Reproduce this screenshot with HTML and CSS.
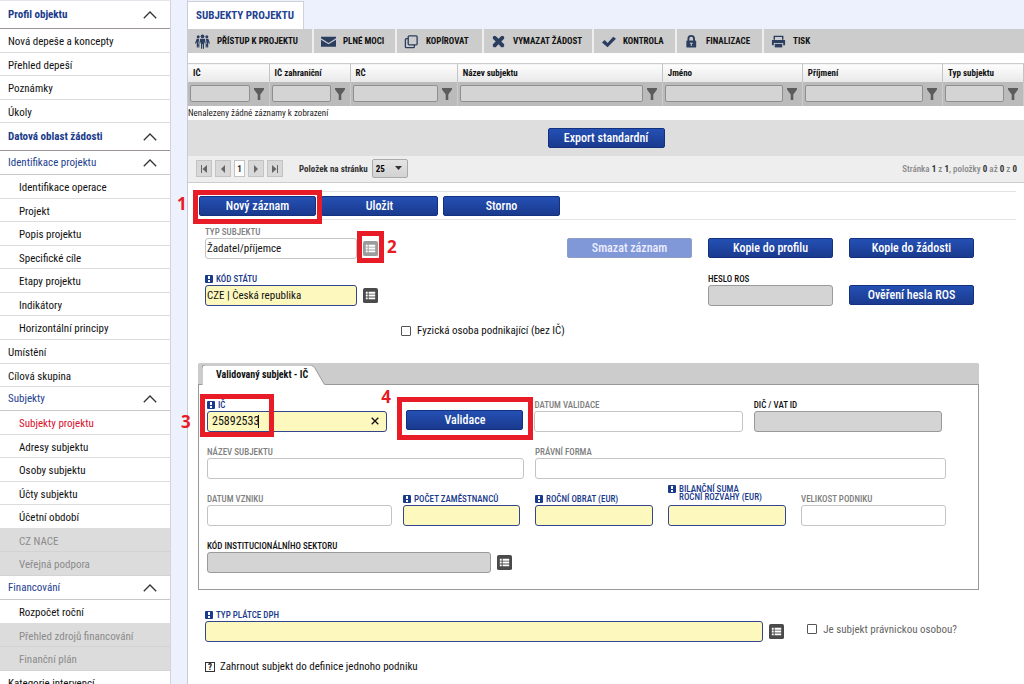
FILE: index.html
```html
<!DOCTYPE html>
<html lang="cs">
<head>
<meta charset="utf-8">
<title>Subjekty projektu</title>
<link rel="stylesheet" href="styles.css">
</head>
<body>
<svg class="sprite" aria-hidden="true">
  <symbol id="i-up" viewBox="0 0 14 8"><path d="M.8 7.200 7 1l6.200 6.200" fill="none" stroke="#333" stroke-width="1.300"/></symbol>
  <symbol id="i-funnel" viewBox="0 0 10 12"><path d="M0 0h10v1.500L6.300 6.500V12H3.700V6.500L0 1.500z" fill="#5c5c5c"/></symbol>
  <symbol id="i-list" viewBox="0 0 16 16"><rect width="16" height="16" rx="2" fill="currentColor"/><path d="M3 4h2v2H3zM6 4h7v2H6zM3 7h2v2H3zM6 7h7v2H6zM3 10h2v2H3zM6 10h7v2H6z" fill="#fff"/></symbol>
  <symbol id="i-req" viewBox="0 0 8 8"><rect width="8" height="8" rx="1" fill="#1a3a8c"/><path d="M3 1h2v3H3zM3 5h2v2H3z" fill="#fff"/></symbol>
</svg>
<div class="app">
  <nav class="side" aria-label="Menu">
    <button class="side-head strong">Profil objektu<svg><use href="#i-up"/></svg></button>
    <ul>
      <li><a href="#">Nová depeše a koncepty</a></li>
      <li><a href="#">Přehled depeší</a></li>
      <li><a href="#">Poznámky</a></li>
      <li><a href="#">Úkoly</a></li>
    </ul>
    <button class="side-head strong">Datová oblast žádosti<svg><use href="#i-up"/></svg></button>
    <button class="side-head">Identifikace projektu<svg><use href="#i-up"/></svg></button>
    <ul class="sub">
      <li><a href="#">Identifikace operace</a></li>
      <li><a href="#">Projekt</a></li>
      <li><a href="#">Popis projektu</a></li>
      <li><a href="#">Specifické cíle</a></li>
      <li><a href="#">Etapy projektu</a></li>
      <li><a href="#">Indikátory</a></li>
      <li><a href="#">Horizontální principy</a></li>
    </ul>
    <ul>
      <li><a href="#">Umístění</a></li>
      <li><a href="#">Cílová skupina</a></li>
    </ul>
    <button class="side-head">Subjekty<svg><use href="#i-up"/></svg></button>
    <ul class="sub">
      <li><a href="#" class="active">Subjekty projektu</a></li>
      <li><a href="#">Adresy subjektu</a></li>
      <li><a href="#">Osoby subjektu</a></li>
      <li><a href="#">Účty subjektu</a></li>
      <li><a href="#">Účetní období</a></li>
      <li class="off"><a href="#">CZ NACE</a></li>
      <li class="off"><a href="#">Veřejná podpora</a></li>
    </ul>
    <button class="side-head">Financování<svg><use href="#i-up"/></svg></button>
    <ul class="sub">
      <li><a href="#">Rozpočet roční</a></li>
      <li class="off"><a href="#">Přehled zdrojů financování</a></li>
      <li class="off"><a href="#">Finanční plán</a></li>
    </ul>
    <ul>
      <li><a href="#">Kategorie intervencí</a></li>
    </ul>
  </nav>

  <main class="main">
    <div class="tabs"><h1>SUBJEKTY PROJEKTU</h1></div>
    <div class="content">
      <div class="toolbar">
        <button><svg viewBox="0 0 16 16"><g fill="#2c3e60"><circle cx="8" cy="2.500" r="2"/><circle cx="3.400" cy="3" r="1.600"/><circle cx="12.600" cy="3" r="1.600"/><path d="M5.500 5h5l1 5-1 .3-.9-2.300v7.800H8.400V11h-.8v4.800H6.400V8l-.9 2.300-1-.3zM1.800 5h2.700l-1 5.500 1.200.5v3.500H3.600l-.3-3-.3 3H1.900V8.500L1 10.500l-1-.5zM14.200 5h-2.700l1 5.500-1.200.5v3.500h1.100l.3-3 .3 3h1.100V8.500l.9 2 1-.5z"/></g></svg>PŘÍSTUP K PROJEKTU</button>
        <button><svg viewBox="0 0 16 16"><path d="M0 3h16v1.500L8 9.500 0 4.500zM0 6l8 5 8-5v7.500H0z" fill="#2c3e60"/></svg>PLNÉ MOCI</button>
        <button><svg viewBox="0 0 16 16"><g fill="none" stroke="#2c3e60" stroke-width="1.400"><rect x="4.500" y="2" width="9.500" height="9.500" rx="1"/><path d="M4.500 5H2.500a1 1 0 0 0-1 1v7.500a1 1 0 0 0 1 1H10a1 1 0 0 0 1-1v-2"/></g></svg>KOPÍROVAT</button>
        <button><svg viewBox="0 0 16 16"><path d="M5 2 8 5l3-3h2l1 1v2l-3 3 3 3v2l-1 1h-2l-3-3-3 3H3l-1-1v-2l3-3-3-3V3l1-1z" fill="#2c3e60"/></svg>VYMAZAT ŽÁDOST</button>
        <button><svg viewBox="0 0 16 16"><path d="M1 9 4 6.500l3 3L13 3l3 2-9 9z" fill="#2c3e60"/></svg>KONTROLA</button>
        <button><svg viewBox="0 0 16 16"><path d="M4.700 8V5a3 3 0 0 1 6 0v3" fill="none" stroke="#2c3e60" stroke-width="2"/><rect x="2.500" y="7" width="10.500" height="7.500" rx="1" fill="#2c3e60"/><path d="M6.300 9.200h3v1.200h-1v2.400h-1v-2.400h-1z" fill="#ccc"/></svg>FINALIZACE</button>
        <button><svg viewBox="0 0 16 16"><path d="M3.500 6V2.500h9V6" fill="none" stroke="#2c3e60" stroke-width="1.500"/><path d="M1 6.500h14V12h-2V9.500H3V12H1z" fill="#2c3e60"/><path d="M4 10.500h8v3.800H4z" fill="#2c3e60"/></svg>TISK</button>
      </div>

      <table class="grid">
        <colgroup><col class="w81"><col class="w81"><col class="w107"><col class="w205"><col class="w140"><col class="w140"><col class="w81"></colgroup>
        <thead>
          <tr><th>IČ</th><th>IČ zahraniční</th><th>RČ</th><th>Název subjektu</th><th>Jméno</th><th>Příjmení</th><th>Typ subjektu</th></tr>
          <tr class="filters">
            <td><div><input aria-label="Filtr IČ"><button aria-label="Filtrovat"><svg><use href="#i-funnel"/></svg></button></div></td>
            <td><div><input aria-label="Filtr IČ zahraniční"><button aria-label="Filtrovat"><svg><use href="#i-funnel"/></svg></button></div></td>
            <td><div><input aria-label="Filtr RČ"><button aria-label="Filtrovat"><svg><use href="#i-funnel"/></svg></button></div></td>
            <td><div><input aria-label="Filtr název subjektu"><button aria-label="Filtrovat"><svg><use href="#i-funnel"/></svg></button></div></td>
            <td><div><input aria-label="Filtr jméno"><button aria-label="Filtrovat"><svg><use href="#i-funnel"/></svg></button></div></td>
            <td><div><input aria-label="Filtr příjmení"><button aria-label="Filtrovat"><svg><use href="#i-funnel"/></svg></button></div></td>
            <td><div><input aria-label="Filtr typ subjektu"><button aria-label="Filtrovat"><svg><use href="#i-funnel"/></svg></button></div></td>
          </tr>
        </thead>
        <tbody><tr><td colspan="7" class="empty">Nenalezeny žádné záznamy k zobrazení</td></tr></tbody>
      </table>
      <div class="export"><button class="btn">Export standardní</button></div>
      <div class="pager">
        <div class="pages">
          <button aria-label="První"><svg viewBox="0 0 8 8"><path d="M1 0h1v8H1zM7 0v8L2.500 4z"/></svg></button>
          <button aria-label="Předchozí"><svg viewBox="0 0 8 8"><path d="M6 0v8L2 4z"/></svg></button>
          <button class="current">1</button>
          <button aria-label="Další"><svg viewBox="0 0 8 8"><path d="M2 0v8l4-4z"/></svg></button>
          <button aria-label="Poslední"><svg viewBox="0 0 8 8"><path d="M6 0h1v8H6zM1 0v8l4.500-4z"/></svg></button>
        </div>
        <label for="size">Položek na stránku</label>
        <div class="select"><select id="size"><option>25</option></select><svg viewBox="0 0 7 4"><path d="M0 0h7L3.500 4z" fill="#333"/></svg></div>
        <p>Stránka <b>1</b> z <b>1</b>, položky <b>0</b> až <b>0</b> z <b>0</b></p>
      </div>

      <div class="actions">
        <div class="spot spot-new"><button class="btn">Nový záznam</button><span class="mark"></span><span class="num">1</span></div>
        <button class="btn">Uložit</button>
        <button class="btn">Storno</button>
      </div>

      <form class="form">
        <div class="top">
          <div class="field muted"><label for="typ">TYP SUBJEKTU</label>
            <div class="pick"><input id="typ" value="Žadatel/příjemce"><div class="spot spot-pick"><button type="button" class="list pale" aria-label="Vybrat typ"><svg><use href="#i-list"/></svg></button><span class="mark"></span><span class="num">2</span></div></div></div>
          <button type="button" class="btn faded">Smazat záznam</button>
          <button type="button" class="btn">Kopie do profilu</button>
          <button type="button" class="btn">Kopie do žádosti</button>
          <div class="field req"><label for="stat"><svg><use href="#i-req"/></svg>KÓD STÁTU</label>
            <div class="pick"><input id="stat" value="CZE | Česká republika"><button type="button" class="list" aria-label="Vybrat stát"><svg><use href="#i-list"/></svg></button></div></div>
          <div class="field locked c3"><label for="heslo">HESLO ROS</label><input id="heslo" type="password" readonly></div>
          <button type="button" class="btn">Ověření hesla ROS</button>
        </div>
        <label class="check person"><input type="checkbox">Fyzická osoba podnikající (bez IČ)</label>

        <section class="panel">
          <div class="panel-bar"><h2><svg viewBox="0 0 124 20" preserveAspectRatio="none" aria-hidden="true"><path d="M0 20V3q0-3 3-3h104q5 0 7 5l7 12q1 3 3 3z" fill="#fff"/><path d="M0 20V3q0-3 3-3h104q5 0 7 5l7 12q1 3 3 3" fill="none" stroke="#999"/></svg><span>Validovaný subjekt - IČ</span></h2></div>
          <div class="panel-body">
            <div class="row r1">
              <div class="field req spot spot-ic"><label for="ic"><svg><use href="#i-req"/></svg>IČ</label>
                <div class="clearable"><input id="ic" value="25892533"><i class="caret"></i><button type="button" aria-label="Smazat"><svg viewBox="0 0 8 8"><path d="m.7.7 6.600 6.600M7.300.7.700 7.300" stroke="#111" stroke-width="1.300"/></svg></button></div>
                <span class="mark"></span><span class="num">3</span></div>
              <div class="spot spot-val"><button type="button" class="btn">Validace</button><span class="mark"></span><span class="num">4</span></div>
              <div class="field muted"><label for="dv">DATUM VALIDACE</label><input id="dv"></div>
              <div class="field locked"><label for="dic">DIČ / VAT ID</label><input id="dic" readonly></div>
            </div>
            <div class="row r2">
              <div class="field muted"><label for="nazev">NÁZEV SUBJEKTU</label><input id="nazev"></div>
              <div class="field muted"><label for="forma">PRÁVNÍ FORMA</label><input id="forma"></div>
            </div>
            <div class="row r3">
              <div class="field muted"><label for="vznik">DATUM VZNIKU</label><input id="vznik"></div>
              <div class="field req inset"><label for="pocet"><svg><use href="#i-req"/></svg>POČET ZAMĚSTNANCŮ</label><input id="pocet"></div>
              <div class="field req inset"><label for="obrat"><svg><use href="#i-req"/></svg>ROČNÍ OBRAT (EUR)</label><input id="obrat"></div>
              <div class="field req inset"><label class="two" for="suma"><svg><use href="#i-req"/></svg><span>BILANČNÍ SUMA<br>ROČNÍ ROZVAHY (EUR)</span></label><input id="suma"></div>
              <div class="field muted"><label for="velikost">VELIKOST PODNIKU</label><input id="velikost"></div>
            </div>
            <div class="row r4">
              <div class="field locked"><label for="sektor">KÓD INSTITUCIONÁLNÍHO SEKTORU</label>
                <div class="pick"><input id="sektor" readonly><button type="button" class="list" aria-label="Vybrat sektor"><svg><use href="#i-list"/></svg></button></div></div>
            </div>
          </div>
        </section>

        <div class="vat">
          <div class="field req"><label for="dph"><svg><use href="#i-req"/></svg>TYP PLÁTCE DPH</label>
            <div class="pick"><input id="dph"><button type="button" class="list" aria-label="Vybrat typ plátce"><svg><use href="#i-list"/></svg></button></div></div>
          <label class="check dim"><input type="checkbox">Je subjekt právnickou osobou?</label>
        </div>
        <div class="include"><button type="button" class="tri" aria-label="Nezadáno">?</button>Zahrnout subjekt do definice jednoho podniku</div>
      </form>
    </div>
  </main>
</div>
</body>
</html>
```
FILE: styles.css
```css
* { box-sizing: border-box; }
body, h1, h2, p, ul { margin: 0; padding: 0; }
body, button, input, select {
  font-family: "Roboto Condensed", "Liberation Sans Narrow", Roboto, sans-serif;
  font-size: 11px;
}
body { color: #111; background: #edf0fd; }
ul { list-style: none; }
a { color: inherit; text-decoration: none; }
button { border: 0; padding: 0; background: none; color: inherit; }
svg { display: block; }
.sprite { position: absolute; width: 0; height: 0; }
.app { display: flex; height: 100vh; overflow: hidden; }

.side { width: 171px; flex: none; background: #fff; border-top: 1px solid #e4e4ea; border-right: 1px solid #d3d3da; margin-right: 16px; }
.side li { height: 24px; border-bottom: 1px solid #dcdcdc; padding-left: 8px; line-height: 25px; white-space: nowrap; }
.side li:nth-child(even) { height: 23px; }
.side .sub li { padding-left: 19px; }
.side .active { color: #d8102c; }
.side .off { background: #dcdcdc; color: #8b8b8b; border-color: #d3d3d3; }
.side-head { display: flex; align-items: center; justify-content: space-between; width: 100%; height: 24px; padding: 0 13px 0 8px; color: #23418f; border-bottom: 1px solid #c8c8c8; }
.side-head.strong { height: 28px; font-weight: bold; color: #1a3a8c; border-color: #9a9494; }
.side-head svg { width: 14px; height: 8px; }

.main { flex: 1; min-width: 0; border-left: 1px solid #c9cad6; }
.tabs { height: 29px; padding-top: 1px; background: #edf0fd; }
.tabs h1 { display: inline-block; height: 28px; padding: 0 8px; background: #fff; border: 1px solid #cfd0da; border-width: 1px 1px 0 0; color: #23418f; font-size: 11px; font-weight: bold; line-height: 28px; min-width: 116px; }
.content { background: #fff; height: 100%; }

.toolbar { display: grid; grid-template-columns: 126px 83px 87px 110px 83px 87px 1fr; height: 24px; background: #ccc; }
.toolbar button { display: flex; align-items: center; gap: 7px; padding-left: 7px; border-right: 2px solid #eee; font-size: 9px; font-weight: bold; white-space: nowrap; }
.toolbar button:last-child { border-right: 0; }
.toolbar svg { width: 15px; height: 15px; flex: none; }

.grid { width: 100%; margin-top: 10px; table-layout: fixed; border-collapse: collapse; border-top: 1px solid #ccc; }
.w81 { width: 81px; } .w107 { width: 107px; } .w205 { width: 205px; } .w140 { width: 140px; }
.grid th { height: 18px; padding: 0 5px; text-align: left; font-size: 9px; background: linear-gradient(#fdfdfd, #e8e8e8); border-right: 1px solid #c4c4c4; white-space: nowrap; }
.grid td { padding: 0; }
.filters td { height: 24px; background: #bbb; border-right: 1px solid #ccc; }
.filters div { display: flex; align-items: center; gap: 4px; padding: 0 5px 0 2px; }
.filters input { flex: 1; min-width: 0; height: 17px; border: 1px solid #8f8f8f; border-radius: 2px; background: #d4d4d4; }
.filters button, .filters svg { width: 10px; height: 12px; }
.grid .empty { height: 14px; font-size: 9px; line-height: 14px; color: #222; }

.btn { height: 20px; min-width: 117px; border: 1px solid #14317f; border-radius: 2px; background: linear-gradient(#2450b4, #1a3a8e); color: #fff; font-size: 12px; font-weight: 500; line-height: 18px; white-space: nowrap; }
.btn.faded { background: #8098d8; border-color: #8f9dc4; color: #eef; }
.export { display: flex; justify-content: center; align-items: center; height: 36px; background: #dedede; }
.pager { display: flex; align-items: center; height: 27px; padding: 0 7px 0 8px; background: #eee; border-bottom: 1px solid #ccc; font-size: 9px; font-weight: bold; color: #333; }
.pages { display: flex; gap: 3px; margin-right: 16px; }
.pages button { display: grid; place-items: center; width: 16px; height: 17px; border: 1px solid #c3c3c3; background: #d8d8d8; font-size: 9px; }
.pages .current { width: 11px; background: #fff; font-weight: bold; }
.pages svg { width: 8px; height: 8px; fill: #666; }
.select { position: relative; margin-left: 4px; }
.select select { appearance: none; display: block; width: 36px; height: 19px; padding: 0 3px; border: 1px solid #aaa; border-radius: 2px; background: linear-gradient(#e4e4e4, #d2d2d2); font-size: 9px; font-weight: bold; }
.select svg { position: absolute; right: 6px; top: 7px; width: 7px; height: 4px; pointer-events: none; }
.pager p { margin-left: auto; font-weight: 500; color: #888; }
.pager p b { color: #333; }

.actions { display: flex; align-items: center; gap: 5px; height: 29px; margin: 8px 8px 0; padding: 2px 0 0 3px; border: 1px solid #e3e3e3; border-width: 1px 0; }

.spot { position: relative; }
.mark { position: absolute; border: 5px solid #e81c26; pointer-events: none; }
.num { position: absolute; color: #e81c26; font: bold 17px/20px "Open Sans", sans-serif; }
.spot-new .mark { inset: -6px -6px -8px; }
.spot-new .num { left: -22px; top: -2px; }
.spot-pick .mark { inset: -10px -6px -7px; }
.spot-pick .num { left: 24px; top: -4px; }
.spot-ic .mark { left: -7px; top: -6px; width: 74px; height: 43px; }
.spot-ic .num { left: -26px; top: 12px; }
.spot-val .mark { right: -10px; top: -3px; width: 136px; height: 43px; }
.spot-val .num { left: -17px; top: -13px; }

.form { padding: 7px 45px 0 10px; }
.field label { display: flex; align-items: center; gap: 3px; height: 11px; font-size: 9px; font-weight: 500; line-height: 9px; white-space: nowrap; }
.field label svg { width: 8px; height: 8px; flex: none; }
.field input { display: block; width: 100%; height: 21px; padding: 0 1px; border: 1px solid #c4c4c4; border-radius: 3px; background: #fff; color: #111; }
.muted label { color: #808080; }
.req label { color: #1a3a8c; }
.req input { border-color: #33458c; background: #fdf8bd; }
.locked input { border-color: #9a9a9a; background: #d4d4d4; }
.field .two { align-items: flex-start; height: 20px; line-height: 8px; }
.pick { display: flex; align-items: center; gap: 6px; }
.list { display: block; width: 15px; height: 15px; color: #4a4a4a; flex: none; }
.list svg { width: 15px; height: 15px; }
.list.pale { color: #9c9c9c; }

.top { display: grid; grid-template-columns: 346fr 125fr 125fr 125fr; gap: 15px 16px; padding: 0 5px 0 7px; align-items: end; }
.top .field:not(.c3) { width: 50%; }
.top .c3 { grid-column: 3; }
.top .btn { margin-bottom: 1px; }
.check { display: flex; align-items: center; gap: 6px; }
.check input { appearance: none; width: 10px; height: 10px; margin: 0; border: 1px solid #555; border-radius: 1px; background: #fff; }
.person { height: 16px; margin: 17px 0 24px; padding-left: 26%; }
.dim { color: #666; }

.panel { border: 1px solid #999; border-top: 0; border-radius: 3px 3px 0 0; }
.panel-bar { display: flex; align-items: flex-end; height: 22px; margin: 0 -1px; padding-left: 4px; background: #ccc; border-bottom: 1px solid #999; border-radius: 3px 3px 0 0; }
.panel-bar h2 { position: relative; padding: 0 10px 0 14px; height: 20px; font-size: 10px; line-height: 19px; margin-bottom: -1px; width: 124px; white-space: nowrap; }
.panel-bar h2 svg { position: absolute; inset: 0; width: 100%; height: 100%; }
.panel-bar h2 span { position: relative; }
.panel-body { display: flex; flex-direction: column; gap: 15px; padding: 15px 32px 16px 8px; }
.row { display: grid; grid-template-rows: 32px; gap: 11px; align-items: end; }
.r1 { grid-template-columns: 180fr 125fr 208fr 188fr; padding-right: 4px; }
.r2 { grid-template-columns: 317fr 411fr; }
.r3 { grid-template-columns: 185fr 121fr 122fr 122fr 145fr; }
.r4 { grid-template-columns: 305fr 423fr; }
.inset { padding-right: 4px; }
.spot-val { display: flex; justify-content: flex-end; height: 32px; padding-bottom: 2px; align-items: flex-end; }
.clearable { position: relative; }
.clearable input { padding-left: 4px; font-size: 12px; }
.clearable button { position: absolute; right: 8px; top: 6px; }
.clearable svg { width: 8px; height: 8px; }
.caret { position: absolute; left: 51px; top: 4px; width: 1px; height: 13px; background: #111; }

.vat { display: flex; align-items: flex-end; gap: 23px; margin-top: 20px; padding: 0 22px 0 7px; }
.vat .field { flex: 1; }
.vat .check { height: 25px; }
.include { display: flex; align-items: center; gap: 5px; margin-top: 18px; padding-left: 7px; line-height: 14px; }
.tri { width: 10px; height: 10px; border: 1px solid #333; font-size: 9px; font-weight: bold; line-height: 8px; }
```
